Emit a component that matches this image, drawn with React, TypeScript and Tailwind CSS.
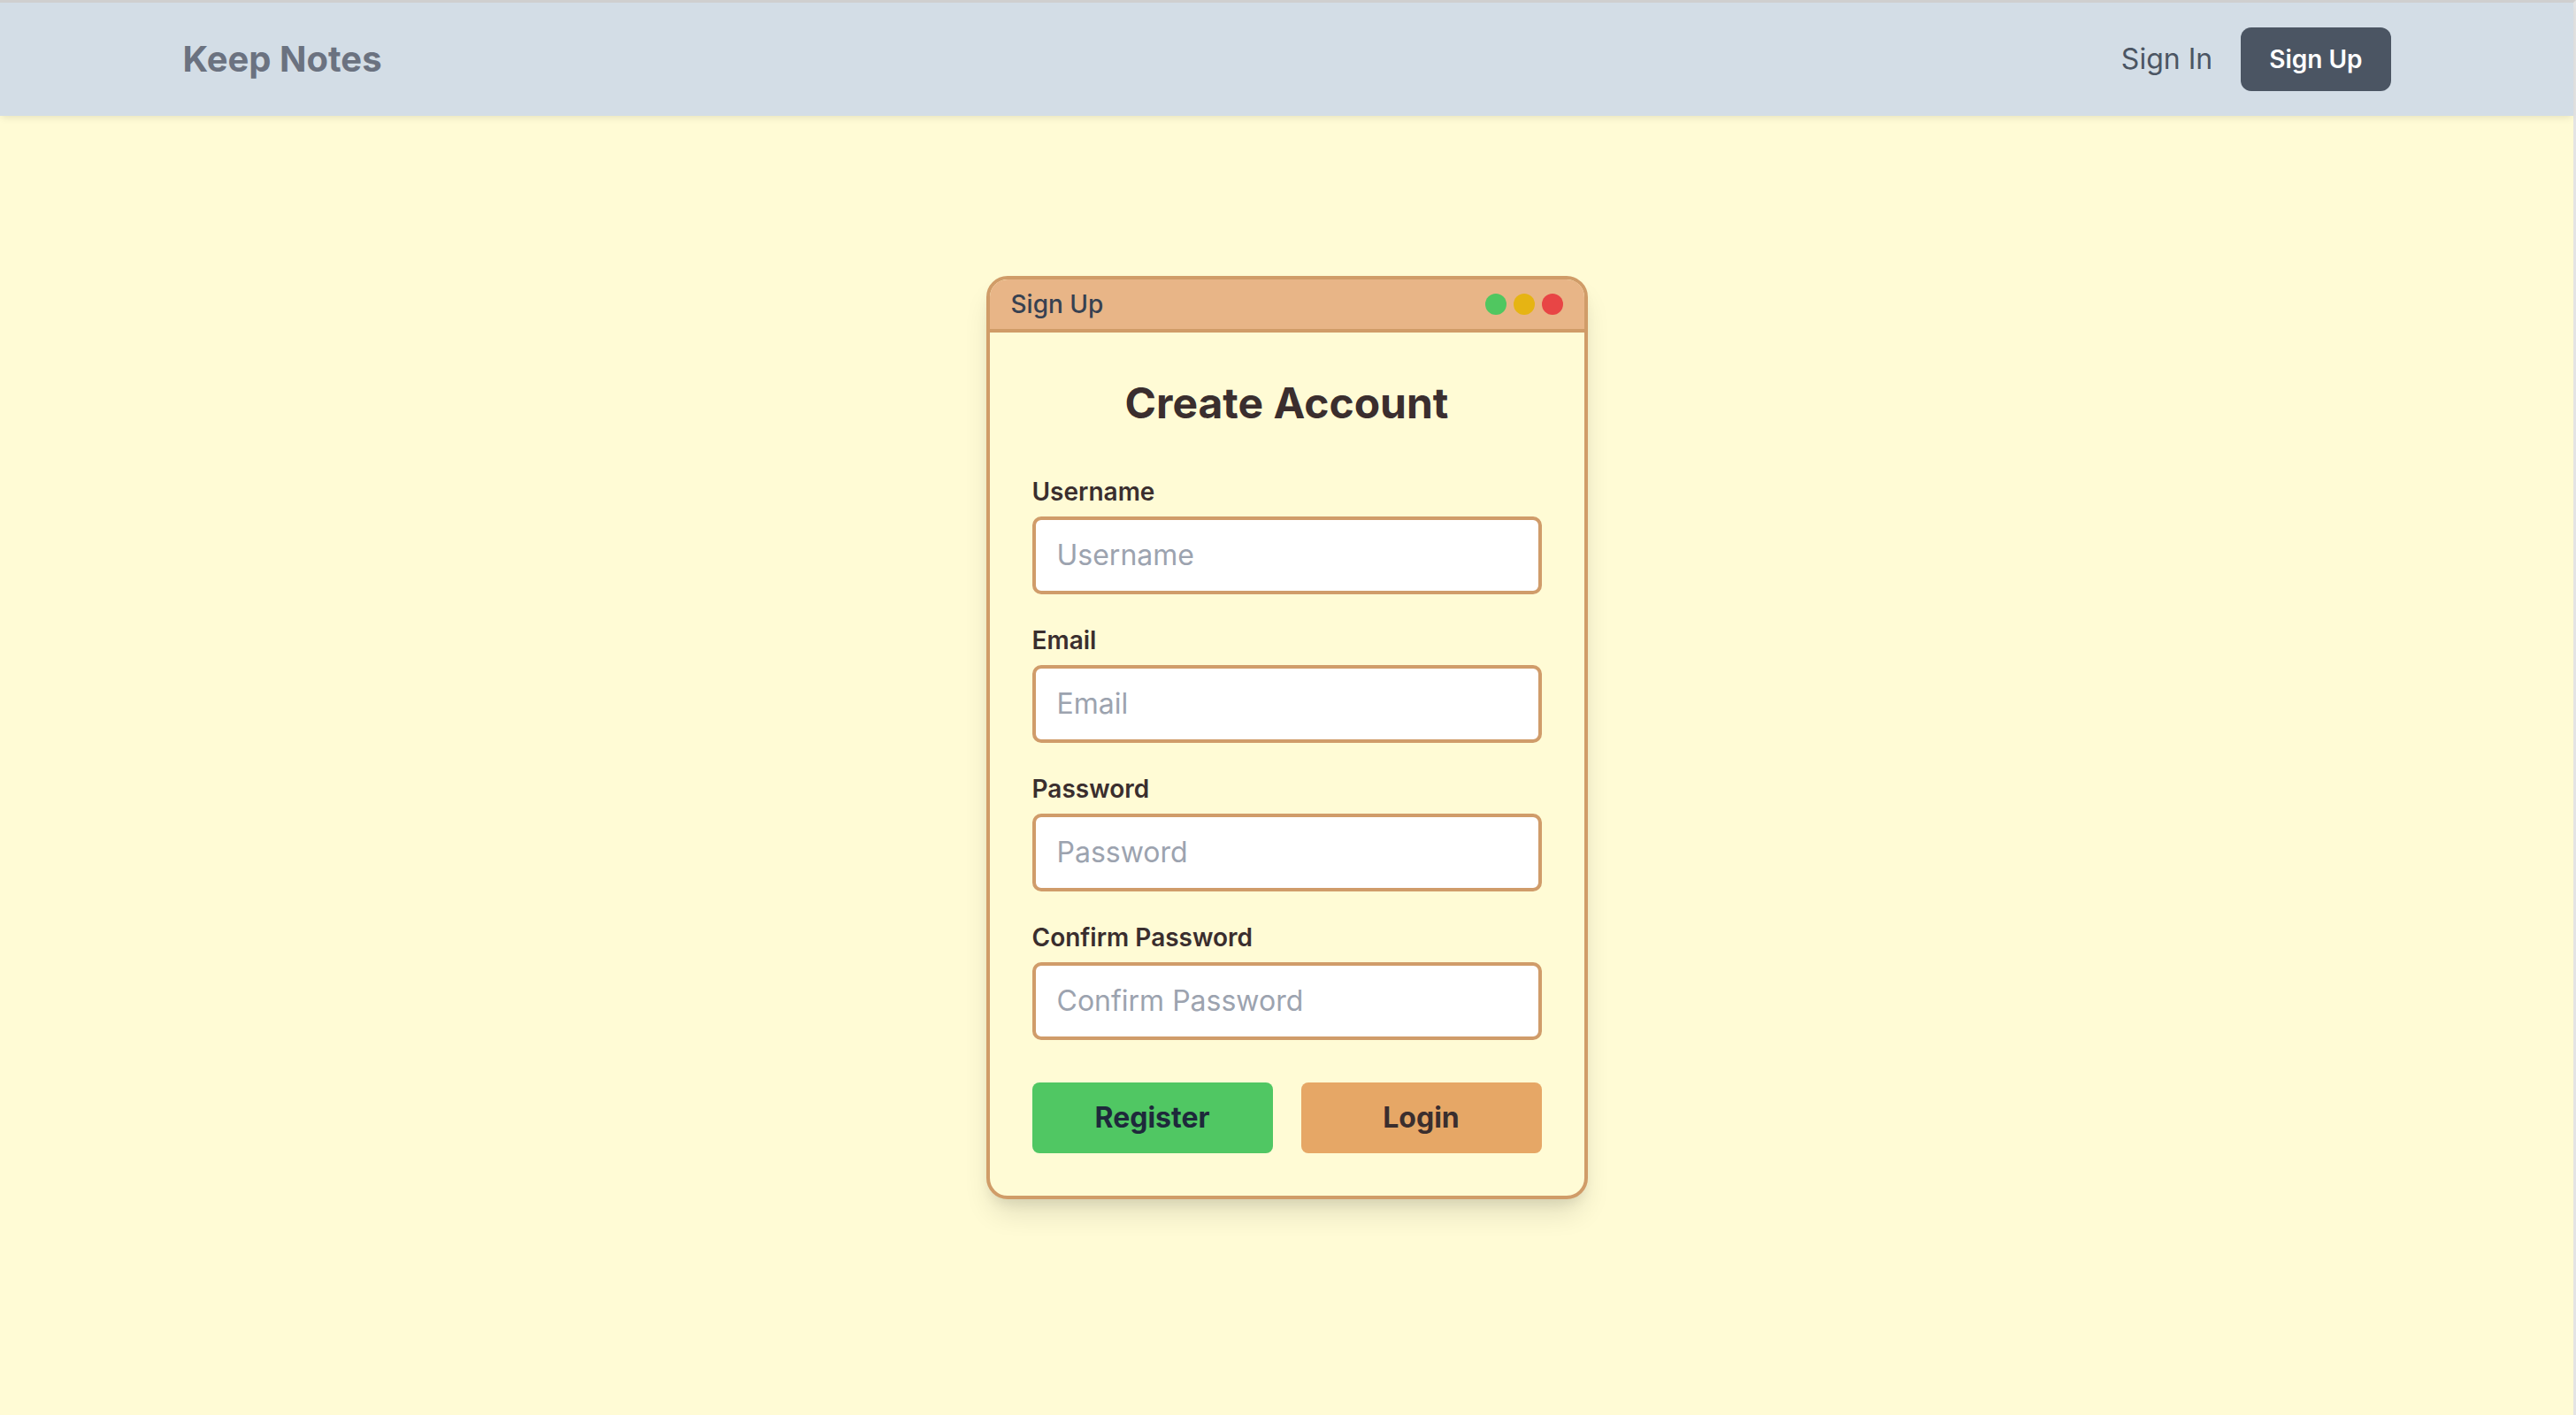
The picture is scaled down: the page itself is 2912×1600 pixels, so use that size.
import { useState } from "react";

const fields = [
  { key: "username", label: "Username", type: "text" },
  { key: "email", label: "Email", type: "email" },
  { key: "password", label: "Password", type: "password" },
  { key: "confirm", label: "Confirm Password", type: "password" },
];

export default function App() {
  const [values, setValues] = useState<Record<string, string>>({});

  return (
    <div className="min-h-screen bg-[#fffbd5] border-t-[3px] border-t-[#cfcfcf] border-r-[3px] border-r-[#e4e4e4] font-['Inter','Noto_Sans',sans-serif]">
      <nav className="h-[128px] bg-[#d3dde6] shadow-[0_4px_8px_-2px_rgba(0,0,0,0.1)] relative">
        <div className="max-w-[2560px] mx-auto px-[32px] h-full flex items-center justify-between">
          <span className="text-[40px] leading-[56px] font-bold text-[#6b7280]">Keep Notes</span>
          <div className="flex items-center gap-[32px]">
            <a href="#" className="text-[32px] leading-[48px] text-[#4b5563]">Sign In</a>
            <button className="px-[32px] py-[16px] rounded-[12px] bg-[#4b5563] text-white text-[28px] leading-[40px] font-semibold">
              Sign Up
            </button>
          </div>
        </div>
      </nav>

      <main className="pt-[181px] pb-[100px]">
        <div className="w-[680px] mx-auto rounded-[24px] border-[4px] border-[#d09c68] bg-[#fffbd5] overflow-hidden shadow-[0_20px_32px_-6px_rgba(0,0,0,0.12),0_8px_14px_-4px_rgba(0,0,0,0.08)]">
          <div className="flex items-center justify-between px-[24px] py-[8px] bg-[#e8b587] border-b-[4px] border-[#d09c68]">
            <span className="text-[28px] leading-[40px] font-medium text-[#374151]">Sign Up</span>
            <div className="flex items-center gap-[8px]">
              <span className="w-[24px] h-[24px] rounded-full bg-[#50c760]" />
              <span className="w-[24px] h-[24px] rounded-full bg-[#e6b413]" />
              <span className="w-[24px] h-[24px] rounded-full bg-[#e84545]" />
            </div>
          </div>

          <div className="p-[48px]">
            <h1 className="text-[48px] leading-[64px] font-bold text-center text-[#3a2e2e] mb-[48px]">Create Account</h1>

            {fields.map((f) => (
              <div key={f.key} className="mb-[32px]">
                <label className="block text-[28px] leading-[40px] font-semibold text-[#3a2e2e] mb-[8px]">{f.label}</label>
                <input
                  type={f.type}
                  placeholder={f.label}
                  value={values[f.key] || ""}
                  onChange={(e) => setValues({ ...values, [f.key]: e.target.value })}
                  className="w-full bg-white border-[4px] border-[#d09c6a] rounded-[10px] px-[24px] py-[16px] text-[32px] leading-[48px] text-[#3a2e2e] placeholder:text-[#9ca3af] outline-none"
                />
              </div>
            ))}

            <div className="grid grid-cols-2 gap-[32px] pt-[16px]">
              <button className="h-[80px] rounded-[8px] bg-[#50c763] text-[#1e293b] text-[32px] font-bold">Register</button>
              <button className="h-[80px] rounded-[8px] bg-[#e6a766] text-[#3a2e2e] text-[32px] font-bold">Login</button>
            </div>
          </div>
        </div>
      </main>
    </div>
  );
}
